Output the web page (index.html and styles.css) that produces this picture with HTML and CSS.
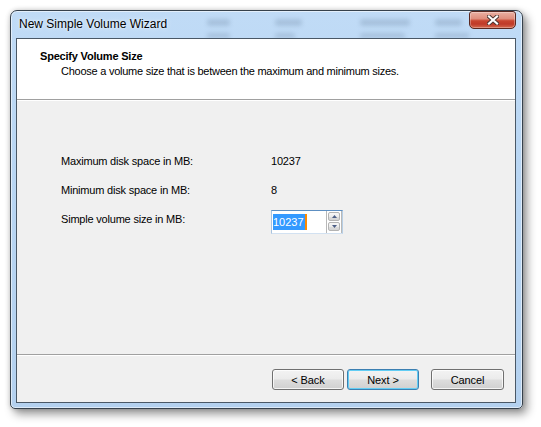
FILE: index.html
```html
<!DOCTYPE html>
<html>
<head>
<meta charset="utf-8">
<title>New Simple Volume Wizard</title>
<link rel="stylesheet" href="styles.css">
</head>
<body>
<div class="window">
  <div class="titlebar">
    <span class="title">New Simple Volume Wizard</span>
    <div class="ghost" aria-hidden="true">
      <div class="ghost-row"><i class="gc1 w23"></i><i class="gc2 w27"></i><i class="gc3 w50"></i><i class="w27"></i></div>
      <div class="ghost-row"><i class="gc1 w23"></i><i class="gc2b w20"></i><i class="gc3b w45"></i><i class="w35"></i></div>
    </div>
    <div class="close">
      <svg width="12" height="10" viewBox="0 0 12 10"><path d="M2 1.5 L10 8.5 M10 1.5 L2 8.5" stroke="#4b3530" stroke-width="4" stroke-linecap="square" fill="none"/><path d="M2 1.5 L10 8.5 M10 1.5 L2 8.5" stroke="#ffffff" stroke-width="2.2" stroke-linecap="square" fill="none"/></svg>
    </div>
  </div>
  <div class="client">
    <div class="header">
      <div class="h-title">Specify Volume Size</div>
      <div class="h-sub">Choose a volume size that is between the maximum and minimum sizes.</div>
    </div>
    <div class="body">
      <div class="row"><span class="label">Maximum disk space in MB:</span><span class="value">10237</span></div>
      <div class="row"><span class="label">Minimum disk space in MB:</span><span class="value">8</span></div>
      <div class="row"><span class="label">Simple volume size in MB:</span>
        <div class="spin">
          <div class="field"><span class="sel">10237</span><span class="caret"></span></div>
          <div class="spin-btns">
            <span class="sb"><svg width="5" height="3" viewBox="0 0 5 3"><path d="M0 3 L2.5 0 L5 3 Z" fill="#4d5f86"/></svg></span>
            <span class="sb"><svg width="5" height="3" viewBox="0 0 5 3"><path d="M0 0 L5 0 L2.5 3 Z" fill="#4d5f86"/></svg></span>
          </div>
        </div>
      </div>
    </div>
    <div class="footer">
      <button class="btn back">&lt; Back</button>
      <button class="btn next">Next &gt;</button>
      <button class="btn cancel">Cancel</button>
    </div>
  </div>
</div>
</body>
</html>
```
FILE: styles.css
```css
html, body {
  margin: 0;
}
body {
  width: 541px;
  height: 427px;
  box-sizing: border-box;
  padding: 10px 0 0 10px;
  background: #ffffff;
  overflow: hidden;
  font-family: "Liberation Sans", Arial, sans-serif;
  font-size: 11px;
  letter-spacing: -0.2px;
  color: #000;
}
.window {
  width: 513px;
  height: 399px;
  box-sizing: border-box;
  border: 1px solid #36414c;
  border-radius: 7px 7px 5px 5px;
  padding: 0 6px 5px 5px;
  display: flex;
  flex-direction: column;
  background: linear-gradient(180deg, #c0dbf6 0%, #b9d6f3 40%, #b4d1ef 100%);
  box-shadow: inset 0 0 0 1px rgba(255,255,255,0.55), 4px 5px 10px rgba(0,0,0,0.42), 0 0 5px rgba(0,0,0,0.18);
}
.titlebar {
  height: 27px;
  flex-shrink: 0;
  display: flex;
  align-items: flex-start;
  overflow: hidden;
}
.title {
  width: 188px;
  flex-shrink: 0;
  padding: 6px 0 0 3px;
  font-size: 12px;
  line-height: 14px;
  letter-spacing: 0;
  white-space: nowrap;
  color: #000;
  text-shadow: 0 0 5px #eaf4ff, 0 0 2px #eaf4ff;
}
.ghost {
  flex: 1;
  padding-top: 8px;
  filter: blur(2px);
  overflow: hidden;
  height: 27px;
  box-sizing: border-box;
}
.ghost-row {
  display: flex;
  height: 7px;
  margin-bottom: 7px;
}
.ghost i {
  display: block;
  flex: 0 0 auto;
  height: 7px;
  border-radius: 3px;
  background: rgba(70,95,125,0.2);
}
.gc1 { margin-right: 45px; }
.gc2 { margin-right: 58px; }
.gc3 { margin-right: 25px; }
.gc2b { margin-right: 65px; }
.gc3b { margin-right: 30px; }
.w20 { width: 20px; }
.w23 { width: 23px; }
.w27 { width: 27px; }
.w35 { width: 35px; }
.w45 { width: 45px; }
.w50 { width: 50px; }
.close {
  width: 47px;
  height: 18px;
  flex-shrink: 0;
  box-sizing: border-box;
  border: 1px solid #5a2820;
  border-radius: 3px 3px 5px 5px;
  background: linear-gradient(180deg, #eab0a3 0%, #df8e7d 42%, #c8452f 55%, #bf3a29 75%, #d56a4e 100%);
  box-shadow: inset 0 0 0 1px rgba(255,255,255,0.3);
  display: flex;
  align-items: center;
  justify-content: center;
}
.client {
  flex: 1;
  display: flex;
  flex-direction: column;
  border: 1px solid #4a5866;
  background: #f0f0f0;
}
.header {
  height: 61px;
  flex-shrink: 0;
  box-sizing: border-box;
  background: #ffffff;
  border-bottom: 1px solid #a0a0a0;
  box-shadow: 0 1px 0 #ffffff;
  padding: 11px 0 0 23px;
}
.h-title {
  font-weight: bold;
  line-height: 13px;
}
.h-sub {
  margin: 2px 0 0 21px;
  line-height: 13px;
  letter-spacing: -0.25px;
}
.body {
  flex: 1;
  padding: 47px 0 0 44px;
}
.row {
  display: flex;
  align-items: center;
  height: 29px;
  line-height: 13px;
}
.label {
  width: 210px;
  flex-shrink: 0;
}
.spin {
  display: flex;
  width: 72px;
  height: 24px;
  margin-top: 4px;
  box-sizing: border-box;
  border: 1px solid;
  border-color: #5d8fc2 #b7cfe6 #d2e1f1 #a9c3de;
  background: #ffffff;
}
.field {
  flex: 1;
  display: flex;
  align-items: center;
  padding-left: 1px;
}
.sel {
  background: #3399ff;
  color: #ffffff;
  line-height: 16px;
  padding: 0 1px 0 0;
  letter-spacing: 0;
}
.caret {
  width: 2px;
  height: 16px;
  background: #ff8a00;
}
.spin-btns {
  width: 16px;
  flex-shrink: 0;
  box-sizing: border-box;
  border-left: 1px solid #b8b8b8;
  border-right: 1px solid #b8b8b8;
  display: flex;
  flex-direction: column;
  gap: 1px;
  padding: 1px 1px 0 1px;
}
.sb {
  height: 9px;
  box-sizing: border-box;
  border: 1px solid #b3b3b3;
  border-radius: 2px;
  background: linear-gradient(180deg, #f7f7f7 0%, #ececec 50%, #dedede 51%, #d4d4d4 100%);
  display: flex;
  align-items: center;
  justify-content: center;
}
.footer {
  height: 48px;
  flex-shrink: 0;
  box-sizing: border-box;
  border-top: 1px solid #a0a0a0;
  box-shadow: inset 0 1px 0 #ffffff;
  display: flex;
  justify-content: flex-end;
  align-items: flex-start;
  padding: 14px 11px 0 0;
}
.btn {
  box-sizing: border-box;
  width: 72px;
  height: 21px;
  margin: 0;
  padding: 0;
  border: 1px solid #707070;
  border-radius: 3px;
  background: linear-gradient(180deg, #f3f3f3 0%, #ebebeb 48%, #dddddd 52%, #d0d0d0 100%);
  box-shadow: inset 0 0 0 1px rgba(255,255,255,0.75);
  font-family: "Liberation Sans", Arial, sans-serif;
  font-size: 11px;
  letter-spacing: -0.1px;
  color: #000;
}
.next {
  margin-left: 3px;
  border-color: #3c7fb1;
  box-shadow: inset 0 0 0 1px #62cdf4;
}
.cancel {
  width: 73px;
  margin-left: 12px;
}
```
